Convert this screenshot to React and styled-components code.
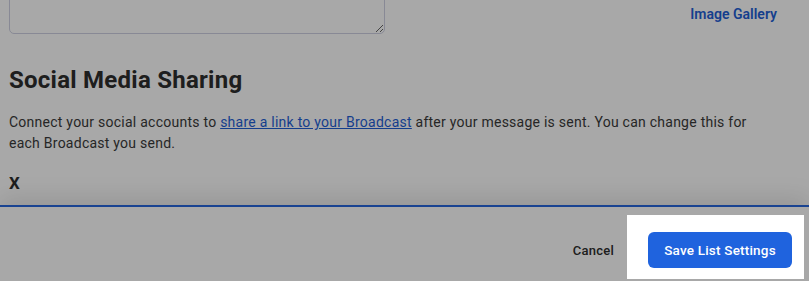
import React from "react";
import styled, { createGlobalStyle } from "styled-components";

const Global = createGlobalStyle`
  html, body { margin: 0; padding: 0; background: #fff; }
  body { font-family: Roboto, "Liberation Sans", Arial, sans-serif; color: #333; overflow: hidden; }
  * { box-sizing: border-box; }
`;

const Page = styled.div`
  position: relative;
  height: 281px;
  overflow: hidden;
`;

const Content = styled.div`
  padding: 0 32px 0 9px;
`;

const MessageRow = styled.div`
  display: flex;
  justify-content: space-between;
  align-items: flex-end;
  margin-top: -66px;
`;

const MessageBox = styled.textarea`
  width: 376px;
  height: 100px;
  border: 1px solid #cfd1e3;
  border-radius: 5px;
  background: #fff;
  resize: vertical;
  font: inherit;
`;

const SideLinks = styled.div`
  display: flex;
  flex-direction: column;
  align-items: flex-end;
  margin-bottom: 9px;
`;

const TextLink = styled.a`
  font-size: 14px;
  line-height: 21px;
  font-weight: 600;
  color: #1f5fd6;
  text-decoration: none;
`;

const Heading = styled.h2`
  margin: 32px 0 0;
  font-size: 24px;
  line-height: 28px;
  font-weight: 700;
  letter-spacing: 0.25px;
  color: #2e2e2e;
`;

const Paragraph = styled.p`
  margin: 18px 0 0;
  font-size: 14px;
  line-height: 21px;
  letter-spacing: 0.25px;
  color: #3a3a3a;
`;

const InlineLink = styled.a`
  color: #1f5fd6;
  text-decoration: underline;
`;

const NetworkTitle = styled.h3`
  margin: 19px 0 0;
  font-size: 17px;
  line-height: 20px;
  font-weight: 700;
  letter-spacing: 0.25px;
  color: #2e2e2e;
`;

const Footer = styled.div`
  position: absolute;
  left: 0;
  right: 0;
  top: 205px;
  bottom: 0;
  background: #fff;
  border-top: 2px solid #2766dc;
  box-shadow: 0 -8px 22px rgba(0, 0, 0, 0.1);
  display: flex;
  justify-content: flex-end;
  align-items: flex-start;
  gap: 34px;
  padding: 25px 17px 0 0;
`;

const CancelButton = styled.button`
  border: 0;
  background: none;
  padding: 0;
  height: 36px;
  font-family: inherit;
  font-size: 13px;
  letter-spacing: 0.25px;
  font-weight: 500;
  color: #2e2e2e;
`;

const Spotlit = styled.div`
  position: relative;
`;

const Spotlight = styled.div`
  position: absolute;
  top: -17px;
  left: -21px;
  right: -12px;
  bottom: -11px;
  box-shadow: 0 0 0 2000px rgba(0, 0, 0, 0.34);
  pointer-events: none;
  z-index: 10;
`;

const PrimaryButton = styled.button`
  height: 36px;
  min-width: 144px;
  border: 0;
  border-radius: 6px;
  background: #1f63de;
  color: #fff;
  padding: 0 16px;
  font-family: inherit;
  font-size: 13.5px;
  letter-spacing: 0.2px;
  font-weight: 500;
  white-space: nowrap;
`;

export default function App() {
  return (
    <Page>
      <Global />
      <Content>
        <MessageRow>
          <MessageBox />
          <SideLinks>
            <TextLink href="#">Image Gallery</TextLink>
          </SideLinks>
        </MessageRow>
        <Heading>Social Media Sharing</Heading>
        <Paragraph>
          Connect your social accounts to{" "}
          <InlineLink href="#">share a link to your Broadcast</InlineLink> after
          your message is sent. You can change this for each Broadcast you send.
        </Paragraph>
        <NetworkTitle>X</NetworkTitle>
      </Content>
      <Footer>
        <CancelButton>Cancel</CancelButton>
        <Spotlit>
          <PrimaryButton>Save List Settings</PrimaryButton>
          <Spotlight />
        </Spotlit>
      </Footer>
    </Page>
  );
}
